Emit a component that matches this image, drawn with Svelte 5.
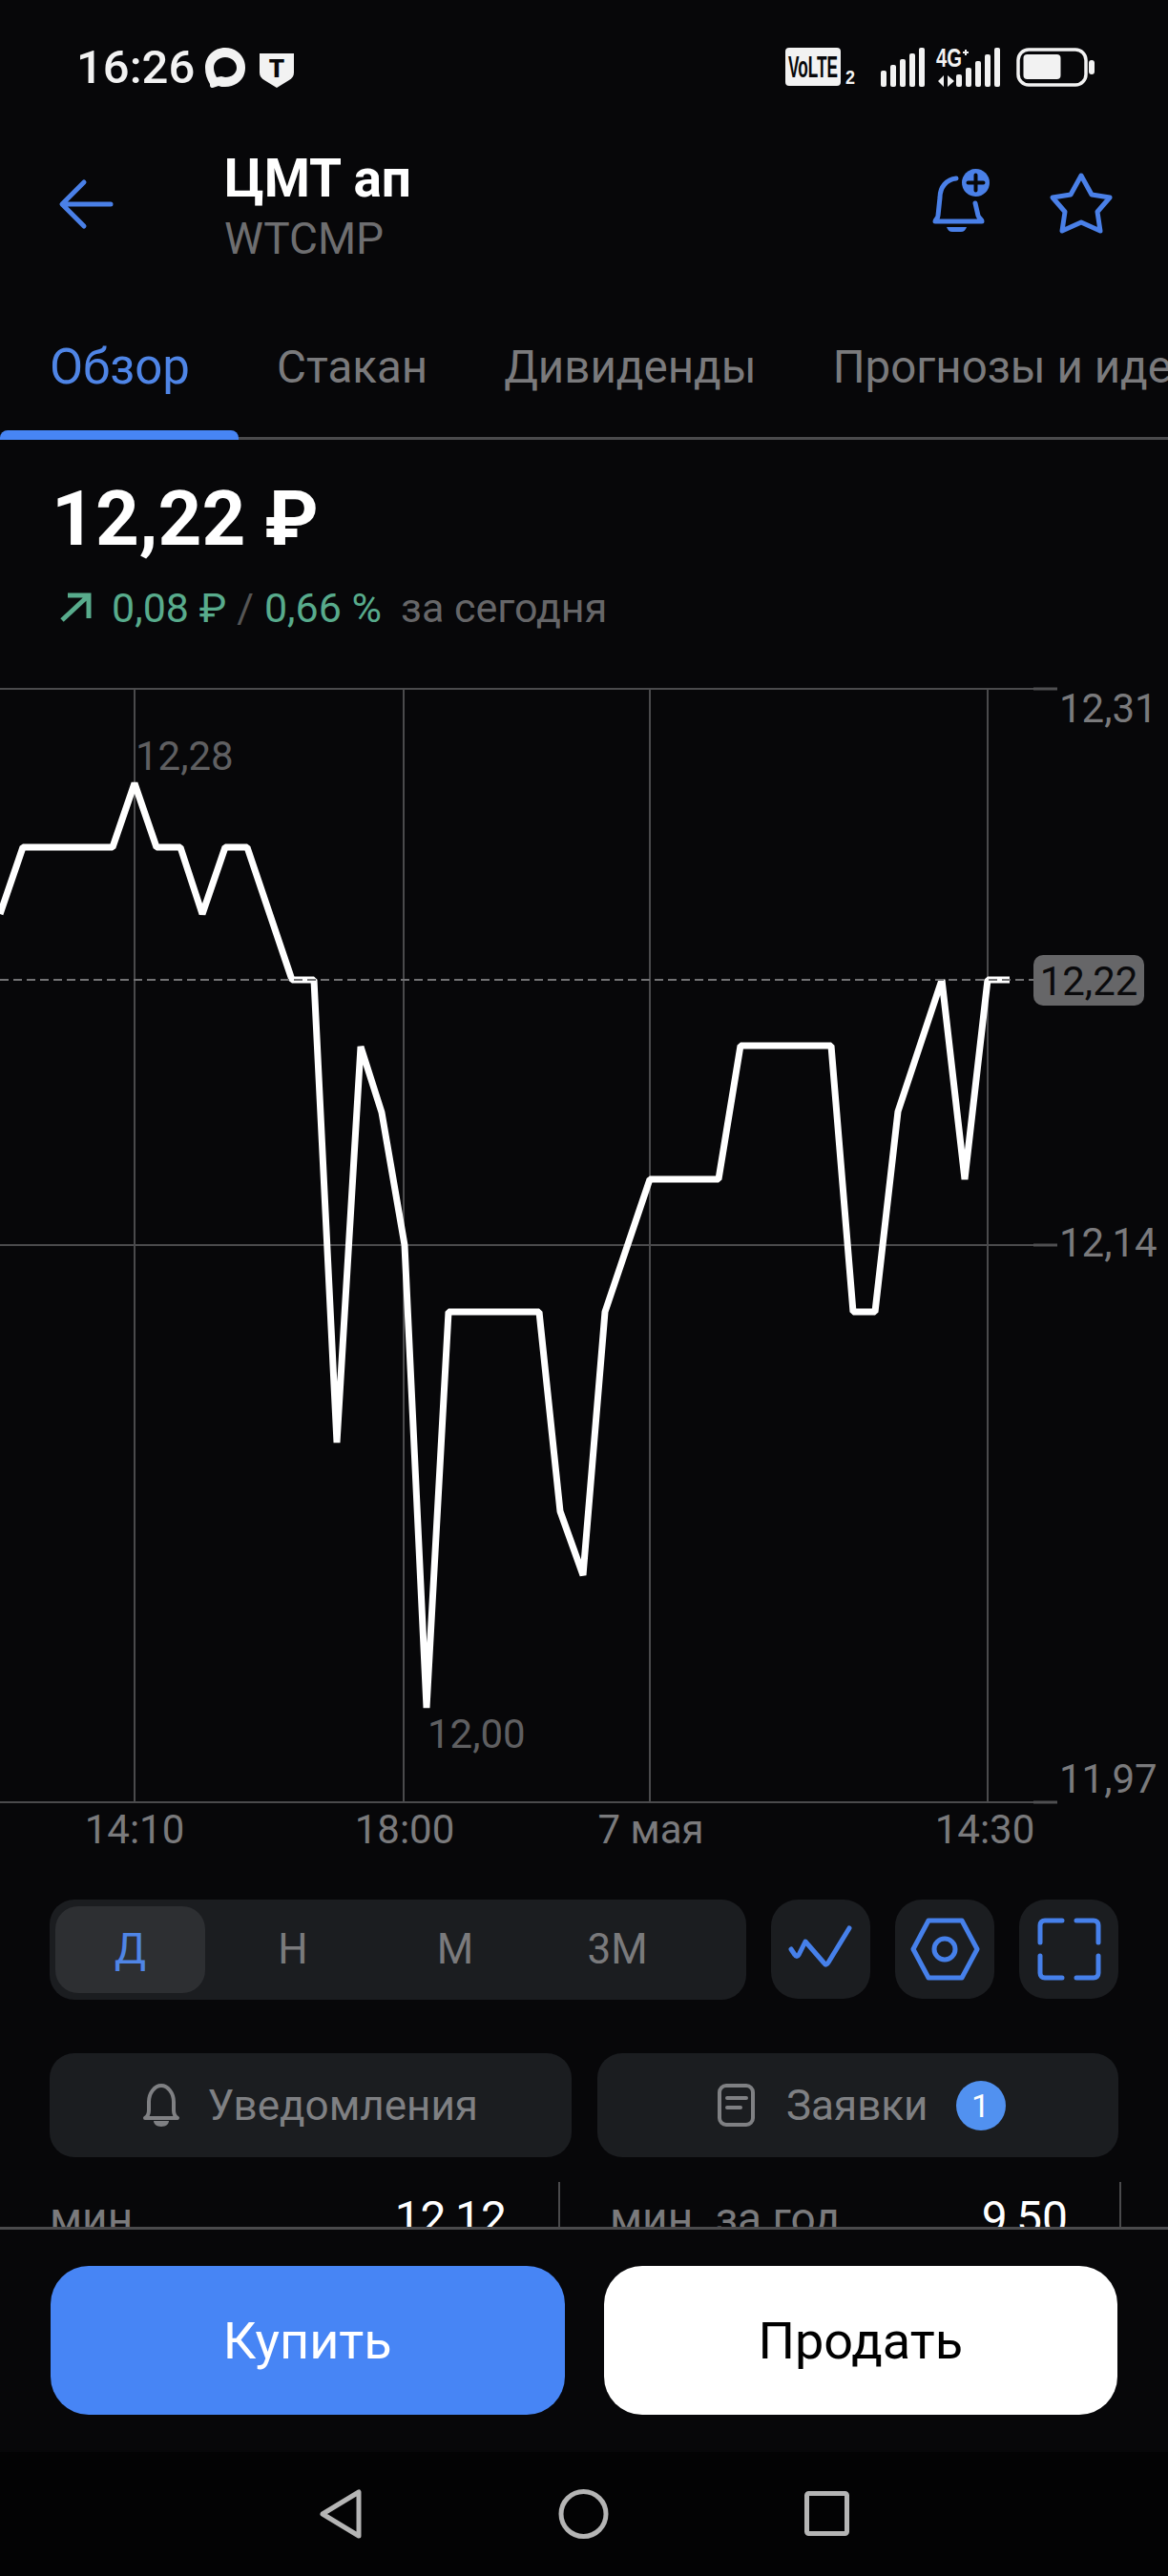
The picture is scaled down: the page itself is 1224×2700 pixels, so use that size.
<script>
  const tabs = ["Обзор", "Стакан", "Дивиденды", "Прогнозы и идеи"];
  const ranges = ["Д", "Н", "М", "3М"];

  // chart vertices, in page pixels
  const points = [
    [0, 958], [24, 888], [118, 888], [141, 821], [164, 888], [189, 888], [212, 958],
    [236, 888], [259, 888], [306, 1027], [329, 1027], [353, 1512], [378, 1097], [400, 1166],
    [424, 1305], [447, 1790], [470, 1375], [565, 1375], [587, 1584], [611, 1651], [634, 1375],
    [681, 1236], [753, 1236], [776, 1096], [871, 1096], [894, 1375], [917, 1375], [941, 1165],
    [987, 1027], [1011, 1236], [1035, 1027], [1058, 1027]
  ];
  const line = points.map((p) => p.join(",")).join(" ");

  const gridX = [141, 423, 681, 1035];
  const gridY = [722, 1305, 1889];
  const priceLabels = [
    { y: 757, text: "12,31" },
    { y: 1317, text: "12,14" },
    { y: 1879, text: "11,97" }
  ];
  const timeLabels = [
    { x: 141, text: "14:10" },
    { x: 424, text: "18:00" },
    { x: 682, text: "7 мая" },
    { x: 1032, text: "14:30" }
  ];
  const bars = [0, 1, 2, 3, 4];
</script>

<div class="phone">
  <div class="status">
    <div class="status-left">
      <span class="time">16:26</span>
      <svg class="i-chat" viewBox="215 50 42 42">
        <path fill="#f2f2f2" fill-rule="evenodd" d="M236 50c12 0 21 9 21 21s-9 20-21 20c-3 0-5 0-7-1l-6 2c-3 0-3-2-3-4-3-5-5-10-5-17 0-12 9-21 21-21zm0 10c-7 0-12 5-12 11 0 3 1 6 2 8l1 2 5-1c1 0 3 1 4 1 7 0 12-4 12-10s-5-11-12-11z" />
      </svg>
      <svg class="i-shield" viewBox="272 56 36 36">
        <path fill="#f2f2f2" d="M272 56h36v20c0 4-2 6-5 8l-13 8-13-8c-3-2-5-4-5-8z" />
        <text x="290" y="81" class="shield-t">T</text>
      </svg>
    </div>
    <div class="status-right">
      <svg class="i-volte" viewBox="823 50 74 41">
        <rect x="823" y="50" width="58" height="40" rx="4" fill="#f2f2f2" />
        <text x="826" y="81" textLength="52" lengthAdjust="spacingAndGlyphs" class="volte">VoLTE</text>
        <text x="886" y="88" textLength="10" lengthAdjust="spacingAndGlyphs" class="sim">2</text>
      </svg>
      <svg class="i-signal" viewBox="923 50 46 41">
        {#each bars as b}
          <rect x={923 + b * 10} y={74 - b * 6} width="6" height={17 + b * 6} rx="2" fill="#f2f2f2" />
        {/each}
      </svg>
      <svg class="i-signal4g" viewBox="981 50 67 41">
        <text x="981" y="70" textLength="27" lengthAdjust="spacingAndGlyphs" class="net">4G</text>
        <path d="M1009 55h6M1012 52v6" stroke="#f2f2f2" stroke-width="2" />
        <path fill="#f2f2f2" d="M983 85l6-6v12zM1000 85l-7-6v12z" />
        {#each bars as b}
          <rect x={1002 + b * 10} y={78 - b * 7} width="6" height={13 + b * 7} rx="2" fill="#f2f2f2" />
        {/each}
      </svg>
      <svg class="i-battery" viewBox="1065 50 82 41">
        <rect x="1067" y="52" width="71" height="37" rx="11" fill="none" stroke="#f2f2f2" stroke-width="3.5" />
        <rect x="1072.5" y="57" width="39" height="26" rx="4" fill="#f2f2f2" />
        <rect x="1141" y="63" width="6" height="15" rx="3" fill="#f2f2f2" />
      </svg>
    </div>
  </div>

  <header class="topbar">
    <svg class="i-back" viewBox="63 189 55 50">
      <path d="M116 214H66M88 191l-23 23 23 23" fill="none" stroke="#4a80e8" stroke-width="5" stroke-linecap="round" stroke-linejoin="round" />
    </svg>
    <div class="titles">
      <div class="title">ЦМТ ап</div>
      <div class="ticker">WTCMP</div>
    </div>
    <svg class="i-bell-plus" viewBox="977 177 60 66">
      <path d="M1002 187c-10 1-17 9-17 20l-2 19c0 3-3 4-3 6h49c0-2-3-3-4-6l-3-13" fill="none" stroke="#4a80e8" stroke-width="5" stroke-linecap="round" stroke-linejoin="round" />
      <path fill="#4a80e8" d="M992 238h21c-1 3-3 5-6 5h-9c-3 0-5-2-6-5z" />
      <circle cx="1022.5" cy="191.5" r="14.5" fill="#4a80e8" />
      <path d="M1022.5 183.5v16M1014.5 191.5h16" stroke="#070709" stroke-width="4" stroke-linecap="round" />
    </svg>
    <svg class="i-star" viewBox="1100 181 66 64">
      <path d="M1133 184l11 20 19 3-13 15 3 20-20-9-20 9 3-20-13-15 19-3z" fill="none" stroke="#4a80e8" stroke-width="5" stroke-linejoin="round" />
    </svg>
  </header>

  <nav class="tabs">
    {#each tabs as tab, i}
      <span class="tab" class:active={i === 0}>{tab}</span>
    {/each}
  </nav>

  <section class="price">
    <div class="value">12,22 ₽</div>
    <div class="change">
      <svg class="i-up" viewBox="62 617 33 31">
        <path d="M65 645l28-26M71 619h22v24" fill="none" stroke="#58ab8c" stroke-width="5" />
      </svg>
      <span class="green">0,08 ₽</span>
      <span class="slash">/</span>
      <span class="green">0,66 %</span>
      <span class="muted">за сегодня</span>
    </div>
  </section>

  <svg class="chart" viewBox="0 700 1224 1250">
    {#each gridY as y}
      <line x1="0" x2="1108" y1={y} y2={y} class="grid" />
      <line x1="1083" x2="1108" y1={y} y2={y} class="tick" />
    {/each}
    {#each gridX as x}
      <line x1={x} x2={x} y1="722" y2="1889" class="grid" />
    {/each}

    <polyline points={line} class="price-line" />
    <line x1="0" x2="1083" y1="1027" y2="1027" class="dash" />

    <text x="142" y="807" class="extreme">12,28</text>
    <text x="448" y="1832" class="extreme">12,00</text>

    {#each priceLabels as l}
      <text x="1110" y={l.y} class="axis">{l.text}</text>
    {/each}
    {#each timeLabels as l}
      <text x={l.x} y="1932" class="axis mid">{l.text}</text>
    {/each}

    <rect x="1083" y="1001" width="116" height="53" rx="10" fill="#666668" />
    <text x="1141" y="1043" class="badge-text">12,22</text>
  </svg>

  <div class="toolbar">
    <div class="ranges">
      {#each ranges as r, i}
        <span class="range" class:active={i === 0}>{r}</span>
      {/each}
    </div>
    <button class="tool" aria-label="Тип графика">
      <svg viewBox="808 1991 104 104">
        <path d="M829 2043l4 6c1 2 3 2 4 0l7-14 20 23c1 2 3 1 4-1l22-36" class="tool-stroke" />
      </svg>
    </button>
    <button class="tool" aria-label="Настройки">
      <svg viewBox="938 1991 104 104">
        <path d="M957 2043l16-30h35l16 30-16 30h-35z" class="tool-stroke" />
        <circle cx="990" cy="2043" r="11" class="tool-stroke" />
      </svg>
    </button>
    <button class="tool" aria-label="На весь экран">
      <svg viewBox="1068 1991 104 104">
        <path d="M1113 2013h-18c-3 0-5 2-5 5v18M1128 2013h18c3 0 5 2 5 5v18M1113 2073h-18c-3 0-5-2-5-5v-18M1128 2073h18c3 0 5-2 5-5v-18" class="tool-stroke" />
      </svg>
    </button>
  </div>

  <div class="actions">
    <div class="action alerts">
      <svg viewBox="152 2184 39 45">
        <path d="M154 2220c3-2 4-4 4-8v-9c0-9 6-17 13-17s13 8 13 17v9c0 4 1 6 4 8z" class="action-stroke" />
        <path fill="#7f8083" d="M163 2223h16c0 3-3 6-8 6s-8-3-8-6z" />
      </svg>
      <span>Уведомления</span>
    </div>
    <div class="action orders">
      <svg viewBox="752 2184 39 45">
        <rect x="754" y="2186" width="35" height="41" rx="7" class="action-stroke" />
        <path d="M762 2199h20M762 2209h14" class="action-stroke" />
      </svg>
      <span>Заявки</span>
      <span class="count">1</span>
    </div>
  </div>

  <div class="stats">
    <div class="stat"><span>мин</span><b>12,12</b></div>
    <div class="stat"><span>мин. за год</span><b>9,50</b></div>
  </div>

  <div class="trade">
    <button class="buy">Купить</button>
    <button class="sell">Продать</button>
  </div>

  <div class="sysnav">
    <svg class="nav-back" viewBox="334 2609 46 52">
      <path d="M376 2612v46l-38-23z" fill="none" stroke="#b5b5b5" stroke-width="5" stroke-linejoin="round" />
    </svg>
    <svg class="nav-home" viewBox="585 2609 53 52">
      <circle cx="611.5" cy="2635" r="23.5" fill="none" stroke="#b5b5b5" stroke-width="5" />
    </svg>
    <svg class="nav-recent" viewBox="843 2611 47 47">
      <rect x="845.5" y="2613.5" width="42" height="42" rx="2" fill="none" stroke="#b5b5b5" stroke-width="5" />
    </svg>
  </div>
</div>

<style>
  :global(body) {
    margin: 0;
    background: #070709;
  }

  svg {
    display: block;
    flex: none;
    overflow: visible;
  }

  .phone {
    width: 1224px;
    height: 2700px;
    overflow: hidden;
    display: flex;
    flex-direction: column;
    background: #070709;
    color: #fff;
    font-family: Roboto, "Noto Sans", sans-serif;
  }

  .status {
    height: 130px;
    padding: 50px 77px 0 80px;
    box-sizing: border-box;
    display: flex;
    justify-content: space-between;
    align-items: flex-start;
  }

  .status-left {
    display: flex;
    align-items: flex-start;
  }

  .time {
    font-size: 49px;
    font-weight: 500;
    line-height: 41px;
    color: #f2f2f2;
    width: 135px;
  }

  .i-chat { width: 42px; height: 42px; }
  .i-shield { width: 36px; height: 36px; margin: 6px 0 0 15px; }

  .status-right {
    display: flex;
    align-items: flex-start;
  }

  .i-volte { width: 74px; height: 41px; }
  .i-signal { width: 46px; height: 41px; margin-left: 26px; }
  .i-signal4g { width: 67px; height: 41px; margin-left: 12px; }
  .i-battery { width: 82px; height: 41px; margin-left: 17px; }

  .volte {
    font: 700 32px "Liberation Sans", sans-serif;
    fill: #070709;
  }

  .sim,
  .net {
    font: 700 20px "Liberation Sans", sans-serif;
    fill: #f2f2f2;
  }

  .net {
    font-size: 28px;
  }

  .shield-t {
    font: 900 26px Roboto, sans-serif;
    text-anchor: middle;
    fill: #070709;
  }

  .topbar {
    height: 160px;
    display: flex;
    align-items: flex-start;
    position: relative;
  }

  .i-back { width: 55px; height: 50px; margin: 59px 0 0 63px; }

  .titles {
    margin: 27px 0 0 117px;
    flex: 1;
  }

  .title {
    font-size: 55px;
    font-weight: 700;
    line-height: 60px;
  }

  .ticker {
    font-size: 46px;
    line-height: 50px;
    color: #6e6e70;
    margin-top: 8px;
  }

  .i-bell-plus { width: 60px; height: 66px; margin-top: 47px; }
  .i-star { width: 66px; height: 64px; margin: 51px 58px 0 63px; }

  .tabs {
    height: 171px;
    box-sizing: border-box;
    display: flex;
    white-space: nowrap;
    border-bottom: 3px solid #4a4a4c;
  }

  .tab {
    flex: none;
    box-sizing: border-box;
    padding: 68px 40px 0;
    font-size: 47.5px;
    line-height: 54px;
    color: #7a7a7c;
    position: relative;
  }

  .tab.active {
    width: 250px;
    padding: 68px 0 0 52px;
    font-size: 51px;
    color: #4f85e6;
  }

  .tab.active::after {
    content: "";
    position: absolute;
    left: 0;
    right: 0;
    bottom: -3px;
    height: 10px;
    border-radius: 8px 8px 0 0;
    background: #4785f5;
  }

  .price {
    height: 239px;
    box-sizing: border-box;
    padding: 36px 0 0 54px;
  }

  .value {
    font-size: 80px;
    font-weight: 700;
    line-height: 94px;
  }

  .change {
    display: flex;
    align-items: center;
    margin: 21px 0 0 8px;
    font-size: 43px;
    line-height: 50px;
  }

  .i-up { width: 33px; height: 31px; margin-right: 22px; }
  .green { color: #58ab8c; }
  .slash { color: #555; margin: 0 11px; }
  .muted { color: #666668; margin-left: 20px; }

  .chart {
    width: 1224px;
    height: 1250px;
    margin-top: 0;
  }

  .grid {
    stroke: #4a4a4c;
    stroke-width: 2;
  }

  .tick {
    stroke: #4f4f51;
    stroke-width: 3;
  }

  .dash {
    stroke: #727274;
    stroke-width: 2;
    stroke-dasharray: 9 5;
  }

  .price-line {
    fill: none;
    stroke: #fff;
    stroke-width: 7;
    stroke-linejoin: bevel;
  }

  .extreme {
    font-size: 42px;
    fill: #5f5f61;
  }

  .axis {
    font-size: 42px;
    fill: #7a7a7c;
  }

  .mid {
    text-anchor: middle;
  }

  .badge-text {
    font-size: 42px;
    text-anchor: middle;
    fill: #0a0a0c;
  }

  .toolbar {
    display: flex;
    align-items: flex-start;
    margin: 41px 0 0 52px;
  }

  .ranges {
    width: 730px;
    height: 105px;
    box-sizing: border-box;
    padding: 7px 6px;
    border-radius: 26px;
    background: #1b1d20;
    display: flex;
  }

  .range {
    width: 170px;
    height: 91px;
    border-radius: 24px;
    font-size: 44px;
    line-height: 91px;
    text-align: center;
    color: #7a7a7c;
  }

  .range.active {
    width: 157px;
    margin-right: 0;
    background: #2d2f32;
    color: #4f85e6;
  }

  .range:nth-child(2) {
    margin-left: 7px;
  }

  .tool {
    width: 104px;
    height: 104px;
    flex: none;
    padding: 0;
    border: 0;
    border-radius: 28px;
    background: #1b1d20;
    margin-left: 26px;
  }

  .tool svg {
    width: 104px;
    height: 104px;
  }

  .tool-stroke {
    fill: none;
    stroke: #4680ea;
    stroke-width: 5;
    stroke-linecap: round;
    stroke-linejoin: round;
  }

  .actions {
    display: grid;
    grid-template-columns: 1fr 1fr;
    gap: 27px;
    margin: 56px 52px 0;
  }

  .action {
    box-sizing: border-box;
    height: 109px;
    border-radius: 26px;
    background: #1b1d20;
    display: flex;
    align-items: center;
    justify-content: center;
    font-size: 44px;
    color: #7f8083;
  }

  .action svg {
    width: 39px;
    height: 45px;
    margin-right: 33px;
  }

  .alerts svg {
    margin-right: 29px;
  }

  .orders {
    padding-left: 8px;
  }

  .action-stroke {
    fill: none;
    stroke: #7f8083;
    stroke-width: 4;
    stroke-linecap: round;
    stroke-linejoin: round;
  }

  .count {
    width: 52px;
    height: 52px;
    margin-left: 29px;
    border-radius: 50%;
    background: #5191f0;
    color: #fff;
    font-size: 34px;
    line-height: 52px;
    text-align: center;
  }

  .stats {
    height: 47px;
    margin-top: 26px;
    padding-left: 52px;
    display: flex;
    overflow: hidden;
    line-height: 54px;
  }

  .stat {
    height: 47px;
    box-sizing: border-box;
    border-right: 2px solid #4a4a4c;
    padding: 11px 54px 0 0;
    display: flex;
    justify-content: space-between;
    align-items: baseline;
    flex: none;
  }

  .stat:first-child {
    width: 535px;
  }

  .stat:last-child {
    width: 588px;
    padding-left: 52px;
  }

  .stat span {
    font-size: 46px;
    color: #7a7a7c;
  }

  .stat b {
    font-size: 48px;
    font-weight: 400;
  }

  .trade {
    height: 236px;
    box-sizing: border-box;
    border-top: 3px solid #4a4a4c;
    padding: 38px 53px 0;
    display: flex;
    gap: 41px;
  }

  .trade button {
    flex: 1;
    height: 156px;
    border: 0;
    padding: 0;
    border-radius: 40px;
    font-family: inherit;
    font-size: 54px;
  }

  .buy {
    background: #4785f5;
    color: #fff;
  }

  .sell {
    background: #fff;
    color: #000;
  }

  .sysnav {
    flex: 1;
    background: #030304;
    position: relative;
    display: flex;
    align-items: flex-start;
    padding-top: 39px;
  }

  .nav-back { width: 46px; height: 52px; margin-left: 334px; }
  .nav-home { width: 53px; height: 52px; margin-left: 205px; }
  .nav-recent { width: 47px; height: 47px; margin: 2px 0 0 205px; }
</style>
